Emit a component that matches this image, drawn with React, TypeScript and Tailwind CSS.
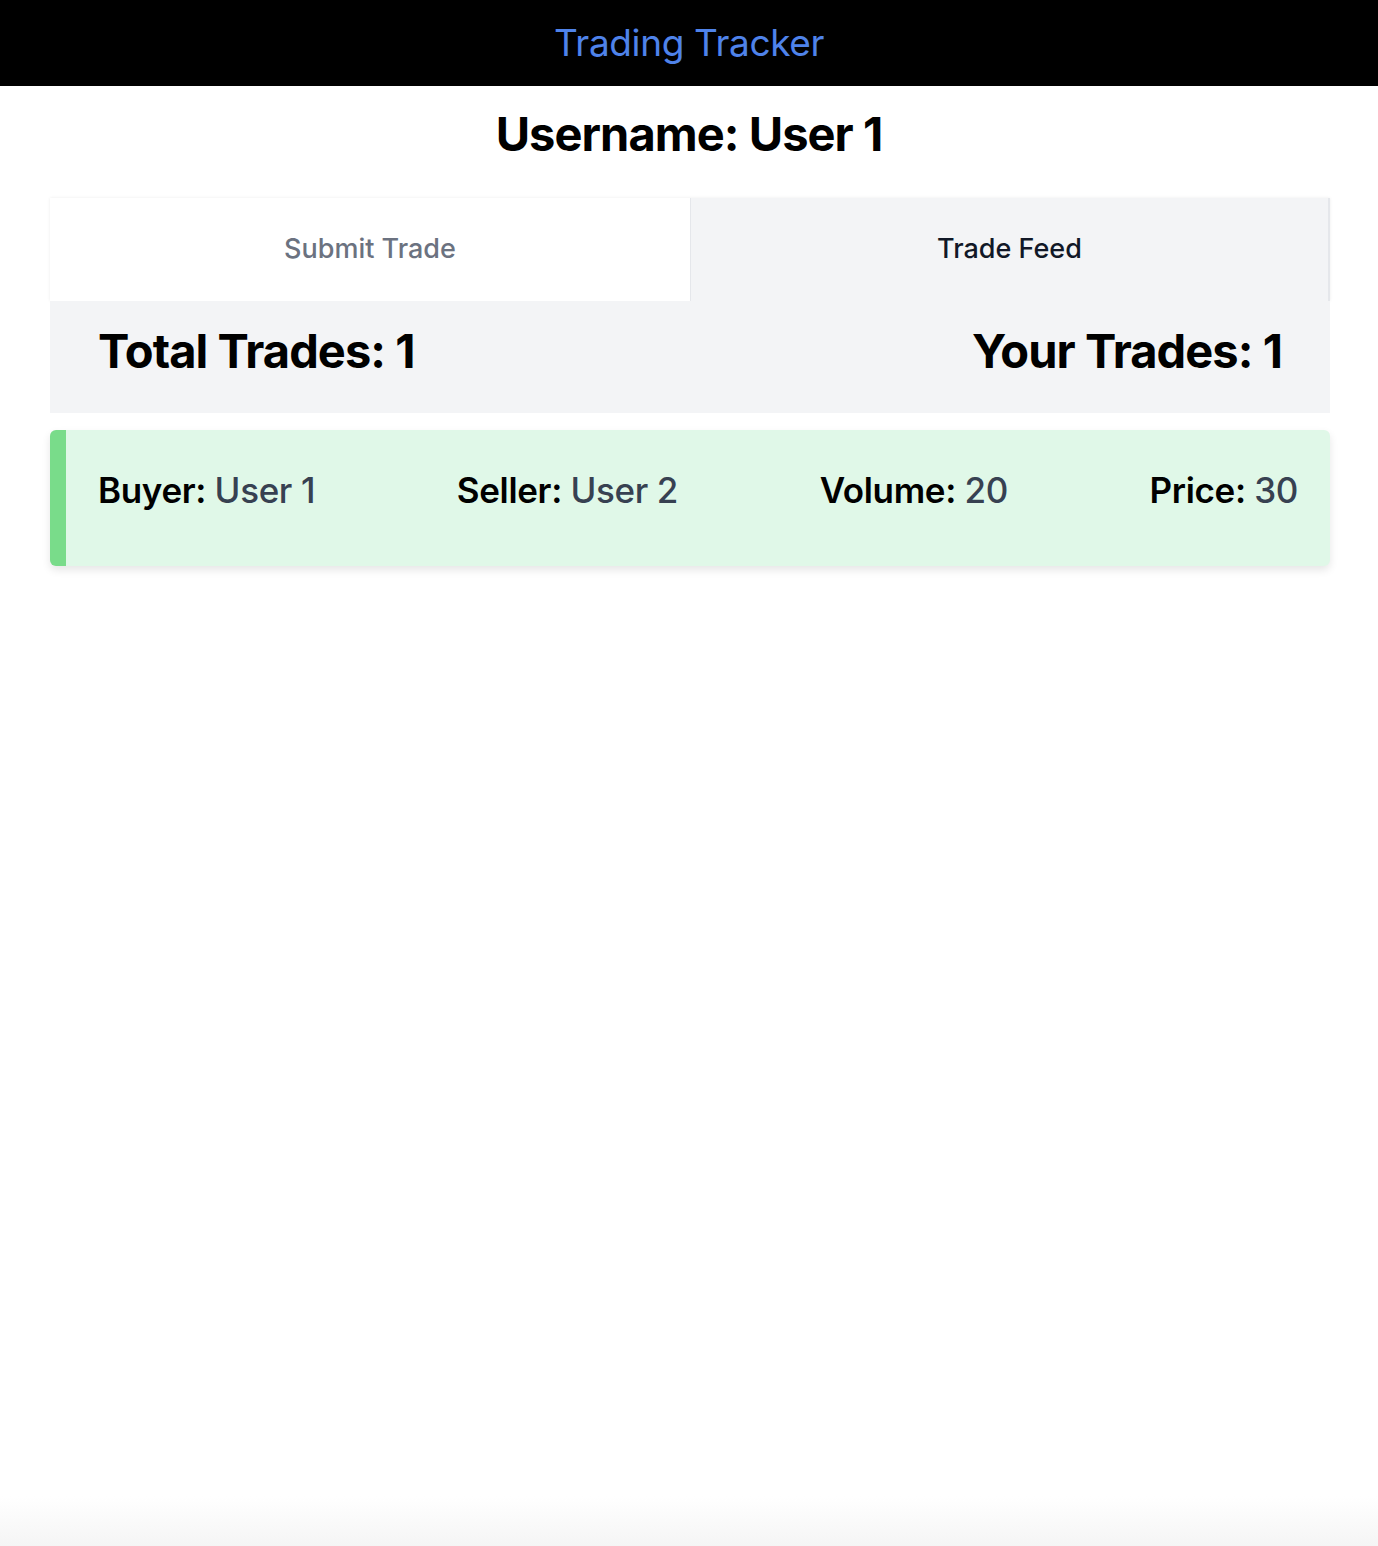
import React from 'react';

interface Trade {
  buyer: string;
  seller: string;
  volume: number;
  price: number;
}

const TRADES: Trade[] = [{ buyer: 'User 1', seller: 'User 2', volume: 20, price: 30 }];

const Field: React.FC<{ label: string; value: string | number }> = ({ label, value }) => (
  <p className="text-[35px] leading-10 font-semibold text-black tracking-[-0.01em]">
    {label}: <span className="font-medium text-[#374151]">{value}</span>
  </p>
);

export default function App() {
  const username = 'User 1';
  const yourTrades = TRADES.filter(t => t.buyer === username || t.seller === username).length;

  return (
    <div className="min-h-screen flex flex-col bg-white font-['Inter',sans-serif]">
      {/* Header */}
      <header className="bg-black h-[86px] flex items-center justify-center">
        <h1 className="text-[37px] leading-10 text-[#4f83ea] tracking-[-0.01em] -mt-px">Trading Tracker</h1>
      </header>

      <h2 className="text-center text-[47px] leading-[48px] font-bold text-black tracking-[-0.02em] mt-[24px] mb-[40px]">
        Username: {username}
      </h2>

      <main className="w-[1280px] ml-[50px]">
        {/* Tabs */}
        <div className="grid grid-cols-2 shadow-[0_0_3px_rgba(0,0,0,0.08)]">
          <button className="h-[103px] flex items-center justify-center bg-white text-[27px] font-medium text-[#6b7280]">
            Submit Trade
          </button>
          <button className="h-[103px] flex items-center justify-center bg-[#f3f4f6] text-[27px] font-medium text-[#111827] border-l border-r-2 border-[#e5e7eb]">
            Trade Feed
          </button>
        </div>

        {/* Stats */}
        <div className="bg-[#f3f4f6] flex justify-between items-center px-12 h-[112px] pb-3">
          <p className="text-[47px] leading-[48px] font-bold text-black tracking-[-0.02em]">Total Trades: {TRADES.length}</p>
          <p className="text-[47px] leading-[48px] font-bold text-black tracking-[-0.02em]">Your Trades: {yourTrades}</p>
        </div>

        {/* Feed */}
        <div className="mt-[17px] flex flex-col gap-4">
          {TRADES.map((t, i) => (
            <div
              key={i}
              className="bg-[#e0f8e8] border-l-[16px] border-[#79dc8a] rounded-md shadow-[0_4px_8px_rgba(0,0,0,0.1)] px-8 pt-[40px] pb-[56px] flex justify-between"
            >
              <Field label="Buyer" value={t.buyer} />
              <Field label="Seller" value={t.seller} />
              <Field label="Volume" value={t.volume} />
              <Field label="Price" value={t.price} />
            </div>
          ))}
        </div>
      </main>

      <div className="mt-auto h-[50px] bg-gradient-to-b from-white to-[#f5f5f5]" />
    </div>
  );
}
